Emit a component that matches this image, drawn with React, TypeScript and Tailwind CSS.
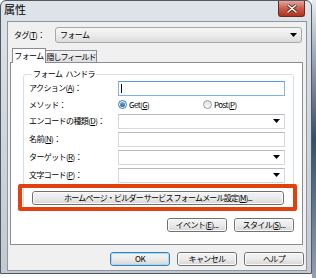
import React from "react";

const Arrow = () => (
  <svg width="7" height="4" viewBox="0 0 7 4" className="shrink-0">
    <path d="M0 0h7L3.5 4z" fill="#000" />
  </svg>
);

function Btn({
  children,
  className = "",
  primary = false,
}: {
  children: React.ReactNode;
  className?: string;
  primary?: boolean;
}) {
  return (
    <div
      className={`flex items-center justify-center rounded-[3px] border ${
        primary ? "border-[#3c7fb1]" : "border-[#707070]"
      } bg-linear-to-b from-[#f4f4f4] via-[#ebebeb] to-[#d6d6d6] text-[8px] leading-none whitespace-nowrap ${className}`}
    >
      <div
        className={`flex h-full w-full items-center justify-center rounded-[2px] border ${
          primary ? "border-[#a6d8f3]" : "border-[#fbfbfb]"
        }`}
      >
        {children}
      </div>
    </div>
  );
}

function Row({
  label,
  h = "h-[18px]",
  children,
}: {
  label: React.ReactNode;
  h?: string;
  children: React.ReactNode;
}) {
  return (
    <div className={`flex items-center ${h}`}>
      <div className="w-[89px] shrink-0 whitespace-nowrap">{label}</div>
      {children}
    </div>
  );
}

const Input = ({ focus = false }: { focus?: boolean }) => (
  <div
    className={`flex h-[15px] w-[167px] items-center bg-white border ${
      focus ? "border-[#7eb4ea] border-t-[#569de5]" : "border-[#d5d8de] border-t-[#b5b9c1]"
    }`}
  >
    {focus && <div className="ml-[2px] h-[9px] w-px bg-black" />}
  </div>
);

const Combo = () => (
  <div className="flex h-[15px] w-[167px] items-center justify-end bg-white border border-[#d5d8de] border-t-[#b5b9c1] pr-[4px]">
    <Arrow />
  </div>
);

const Radio = ({ on = false }: { on?: boolean }) => (
  <div
    className={`flex h-[9px] w-[9px] items-center justify-center rounded-full border ${
      on ? "border-[#3c7fb1] bg-[#e8f2fa]" : "border-[#9a9a9a] bg-linear-to-b from-[#e2e2e2] to-[#f8f8f8]"
    }`}
  >
    {on && <div className="h-[5px] w-[5px] rounded-full bg-linear-to-b from-[#6fb2e4] to-[#1b5f9b]" />}
  </div>
);

export default function App() {
  return (
    <div className="flex h-[278px] w-[316px] overflow-hidden bg-white font-['Noto_Sans_CJK_JP','Noto_Sans',sans-serif] text-[8px] leading-none tracking-[-0.6px] text-black">
      <div className="flex h-[274px] w-[312px] shrink-0 flex-col rounded-t-[6px] border border-[#4f5a66] bg-linear-to-b from-[#dfe4e9] via-[#cfd5dc] to-[#c2c9d1]">
        {/* title bar */}
        <div className="flex h-[20px] shrink-0 items-start">
          <span className="ml-[3px] mt-[3px] text-[11px] leading-none tracking-normal">属性</span>
          <div className="ml-auto mr-[6px] flex h-[16px] w-[27px] items-center justify-center rounded-b-[3px] border border-t-0 border-[#6b2a21] bg-linear-to-b from-[#e6a79a] via-[#c95a49] to-[#b1321c]">
            <svg width="10" height="9" viewBox="0 0 10 9">
              <path d="M1 1l8 7M9 1L1 8" stroke="#5a1a10" strokeWidth="3" strokeLinecap="round" />
              <path d="M1 1l8 7M9 1L1 8" stroke="#fff" strokeWidth="1.6" strokeLinecap="round" />
            </svg>
          </div>
        </div>

        {/* client */}
        <div className="ml-[6px] flex h-[250px] w-[300px] shrink-0 flex-col overflow-hidden border border-[#8b96a2] bg-[#f0f0f0]">
          <div className="mt-[5px] flex h-[16px] shrink-0 items-center pl-[6px]">
            <span className="w-[41px] whitespace-nowrap">
              タグ(<u>T</u>)：
            </span>
            <div className="flex h-[16px] w-[247px] items-center justify-between rounded-[3px] border border-[#a8a8a8] bg-linear-to-b from-[#f6f6f6] via-[#ececec] to-[#dcdcdc] pl-[4px] pr-[4px]">
              <span>フォーム</span>
              <Arrow />
            </div>
          </div>

          {/* tabs */}
          <div className="mt-[4px] flex h-[15px] shrink-0 items-end pl-[4px]">
            <div className="relative z-10 mb-[-1px] flex h-[15px] w-[34px] items-center justify-center whitespace-nowrap border border-b-0 border-[#898c95] bg-white">
              フォーム
            </div>
            <div className="flex h-[12px] w-[51px] items-center justify-center whitespace-nowrap border border-b-0 border-l-0 border-[#898c95] bg-linear-to-b from-[#f2f2f2] to-[#dedede] tracking-[-1px]">
              隠しフィールド
            </div>
          </div>

          <div className="ml-[2px] flex h-[183px] w-[293px] shrink-0 flex-col overflow-hidden border border-[#898c95] bg-white">
            <fieldset className="ml-[12px] mt-[6px] w-[271px] shrink-0 rounded-[3px] border border-[#d5dfe5] pb-[5px] pl-[5px]">
              <legend className="ml-[3px] px-[1px] leading-[10px]">
                フォーム<span className="ml-[3px]">ハンドラ</span>
              </legend>
              <Row label={<>アクション(<u>A</u>)：</>}>
                <Input focus />
              </Row>
              <Row h="h-[15px]" label="メソッド：">
                <div className="flex items-center">
                  <Radio on />
                  <span className="ml-[2px] w-[74px]">
                    Get(<u>G</u>)
                  </span>
                  <Radio />
                  <span className="ml-[2px]">
                    Post(<u>P</u>)
                  </span>
                </div>
              </Row>
              <Row label={<>エンコードの種類(<u>D</u>)：</>}>
                <Combo />
              </Row>
              <Row label={<>名前(<u>N</u>)：</>}>
                <Input />
              </Row>
              <Row label={<>ターゲット(<u>R</u>)：</>}>
                <Combo />
              </Row>
              <Row label={<>文字コード(<u>P</u>)：</>}>
                <Combo />
              </Row>
              <div className="relative ml-[3px] mt-[7px] w-[252px]">
                <Btn className="h-[14px] w-[252px] tracking-[-0.8px]">
                  ホームページ・ビルダー サービス フォームメール設定(<u>M</u>)...
                </Btn>
                <div className="absolute -bottom-[6px] -left-[14px] -right-[13px] -top-[7px] rounded-[2px] border-4 border-[#e2400c]" />
              </div>
            </fieldset>

            <div className="ml-[12px] mt-[7px] flex w-[271px] shrink-0 justify-end gap-[7px]">
              <Btn className="h-[14px] w-[60px]">
                イベント(<u>E</u>)...
              </Btn>
              <Btn className="h-[14px] w-[60px]">
                スタイル(<u>S</u>)...
              </Btn>
            </div>
          </div>

          <div className="mt-[7px] flex shrink-0 justify-end gap-[7px] pr-[2px]">
            <Btn primary className="h-[14px] w-[60px]">
              OK
            </Btn>
            <Btn className="h-[14px] w-[60px]">キャンセル</Btn>
            <Btn className="h-[14px] w-[60px]">ヘルプ</Btn>
          </div>
        </div>
      </div>
      <div className="h-full flex-1 bg-linear-to-b from-[#e8ecef] via-[#33506a] to-[#8fa1b1]" />
    </div>
  );
}
